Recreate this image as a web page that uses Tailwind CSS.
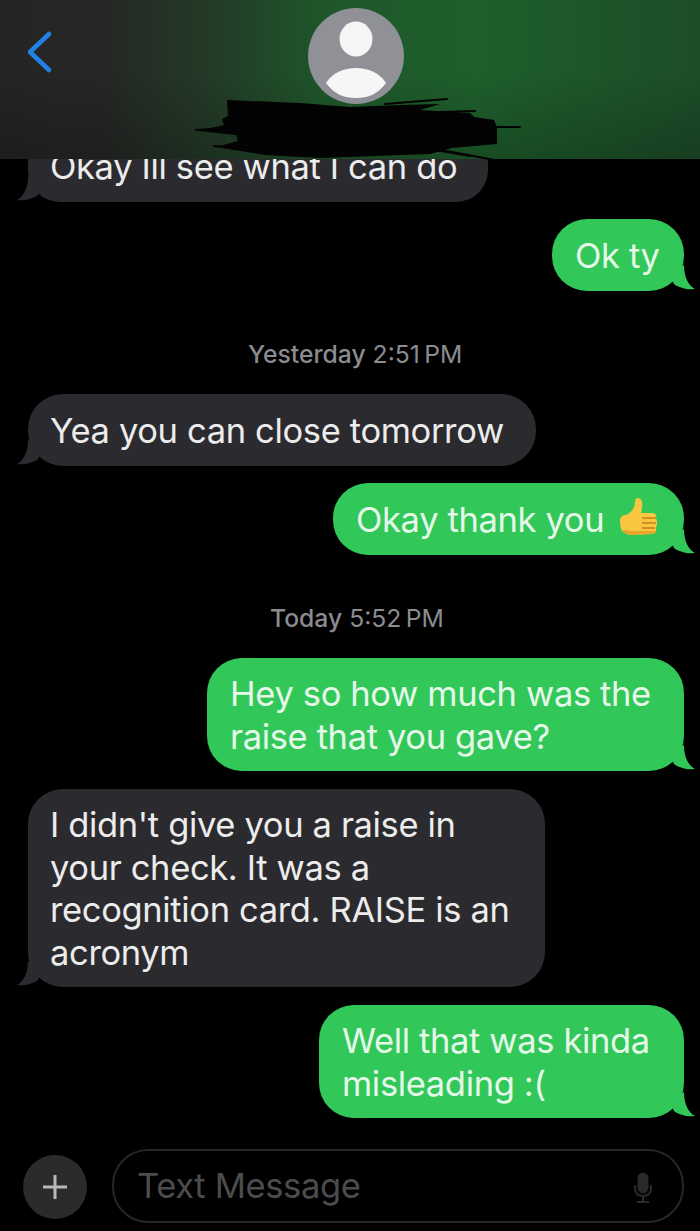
<!DOCTYPE html>
<html lang="en">
<head>
    <meta charset="UTF-8">
    <meta name="viewport" content="width=device-width, initial-scale=1.0">
    <title>Text Message</title>
    <script src="https://cdn.jsdelivr.net/npm/@tailwindcss/browser@4"></script>
</head>
<body class="bg-black w-[700px] h-[1231px] overflow-hidden font-['Inter','Liberation_Sans',sans-serif] text-[34.5px] leading-[42.5px] tracking-[-0.35px] text-[#ececec]">

<!-- header -->
<header class="relative z-10 h-[159px] bg-[linear-gradient(180deg,#0000_45%,#0003_100%),linear-gradient(90deg,#242424_0%,#252725_15%,#233c27_31%,#1f562a_46%,#1e5f2c_68%,#1c4d28_100%)]">
    <svg class="absolute left-[26px] top-[30px] w-[28px] h-[44px]" viewBox="0 0 28 44" fill="none" stroke="#1f82e6" stroke-width="4.5" stroke-linecap="round" stroke-linejoin="round">
        <path d="M23 4 L4 22 L23 40"/>
    </svg>
    <div class="absolute left-[308px] top-[8px] w-[96px] h-[96px] rounded-full overflow-hidden bg-[#8f9197]">
        <svg class="w-full h-full" viewBox="0 0 96 96" fill="#f6f6f6">
            <ellipse cx="48" cy="31" rx="16.5" ry="17.5"/>
            <path d="M18 75 C24 65 36 60 48 60 C60 60 72 65 78 75 C70 86 60 90 48 90 C36 90 26 86 18 75 Z"/>
        </svg>
    </div>
    <!-- scribbled out name, coordinates are page pixels -->
    <svg class="absolute left-0 top-0 w-[700px] h-[165px]" viewBox="0 0 700 165" fill="#030303" stroke="#030303" stroke-linecap="round">
        <path stroke="none" d="M227 100 L300 103 L350 107 L400 105 L440 104 L420 110 L470 113 L474 117 L494 120 L497 127 L497 131 L497 144 L452 148 L430 154 L320 158 L265 155 L216 147 L238 141 L236 135 L198 131 L224 125 L222 119 L228 116 Z"/>
        <path fill="none" stroke-width="2" d="M385 104 L447 99 M440 112 L475 111 M490 127 L520 127 M196 130 L240 127 M214 146 L280 150 M420 146 L500 161 M435 150 L470 156"/>
    </svg>
</header>

<!-- messages -->
<main class="-mt-[29px] flex flex-col">
    <div class="relative ml-[28px] w-[460px] h-[72px] pl-[22px] pt-[16px] rounded-[32px] bg-[#2b2b2f]">
        Okay Ill see what I can do
        <svg class="absolute -left-[11px] bottom-0 w-[30px] h-[28px] text-[#2b2b2f]" viewBox="0 0 30 28" fill="currentColor"><path d="M11 2 C11 15 6 23 0 26 C7 27 16 25 21 21 L26 10 Z"/></svg>
    </div>

    <div class="relative self-end mr-[16px] mt-[17px] w-[132px] h-[72px] pl-[23px] pt-[16px] rounded-[35px] bg-[#31c859] text-[#e6f8ea]">
        Ok ty
        <svg class="absolute -right-[11px] bottom-0 w-[30px] h-[28px] -scale-x-100 text-[#31c859]" viewBox="0 0 30 28" fill="currentColor"><path d="M11 2 C11 15 6 23 0 26 C7 27 16 25 21 21 L26 10 Z"/></svg>
    </div>

    <p class="mt-[47px] h-[31px] ml-[248px] text-[24.7px] leading-[32px] tracking-normal text-[#8b8b90]"><span class="font-medium">Yesterday</span> 2:51&thinsp;PM</p>

    <div class="relative ml-[28px] mt-[25px] w-[508px] h-[72px] pl-[22px] pt-[16px] rounded-[35px] bg-[#2b2b2f]">
        Yea you can close tomorrow
        <svg class="absolute -left-[11px] bottom-0 w-[30px] h-[28px] text-[#2b2b2f]" viewBox="0 0 30 28" fill="currentColor"><path d="M11 2 C11 15 6 23 0 26 C7 27 16 25 21 21 L26 10 Z"/></svg>
    </div>

    <div class="relative self-end mr-[16px] mt-[17px] w-[351px] h-[72px] pl-[23px] pt-[16px] rounded-[35px] bg-[#31c859] text-[#e6f8ea] flex items-start">
        <span>Okay thank you</span>
        <svg class="absolute left-[284px] top-[12px] w-[44px] h-[44px]" viewBox="0 0 44 44">
            <path d="M3 26 C3 21 6 20 9 20 C14 18 18 13 18 7 C18 2 23 2 24.5 5.5 C26 9 25 14 24 18 L35 18 C39 18 40 21 39 24 C41 27 40 30 39 32 C40 35 38 39 35 39 L14 40 C11 40 9 38 6 37 C4 35 3 30 3 26 Z" fill="#f8c73f"/>
            <path d="M25 23 H39 M25 28 H39 M25 33 H38" stroke="#d48f24" stroke-width="2"/>
            <path d="M6 37 C9 38 11 40 14 40 L35 39 C37 39 38 38 39 36 L22 36 C16 36 10 36 6 35 Z" fill="#e9a52c"/>
        </svg>
        <svg class="absolute -right-[11px] bottom-0 w-[30px] h-[28px] -scale-x-100 text-[#31c859]" viewBox="0 0 30 28" fill="currentColor"><path d="M11 2 C11 15 6 23 0 26 C7 27 16 25 21 21 L26 10 Z"/></svg>
    </div>

    <p class="mt-[47px] h-[31px] ml-[270px] text-[24.7px] leading-[32px] tracking-normal text-[#8b8b90]"><span class="font-medium">Today</span> 5:52&thinsp;PM</p>

    <div class="relative self-end mr-[16px] mt-[25px] w-[477px] h-[113px] pl-[23px] pt-[15px] rounded-[35px] bg-[#31c859] text-[#e6f8ea]">
        Hey so how much was the<br>raise that you gave?
        <svg class="absolute -right-[11px] bottom-0 w-[30px] h-[28px] -scale-x-100 text-[#31c859]" viewBox="0 0 30 28" fill="currentColor"><path d="M11 2 C11 15 6 23 0 26 C7 27 16 25 21 21 L26 10 Z"/></svg>
    </div>

    <div class="relative ml-[28px] mt-[18px] w-[517px] h-[198px] pl-[22px] pt-[15px] rounded-[35px] bg-[#2b2b2f]">
        I didn't give you a raise in<br>your check. It was a<br>recognition card. RAISE is an<br>acronym
        <svg class="absolute -left-[11px] bottom-0 w-[30px] h-[28px] text-[#2b2b2f]" viewBox="0 0 30 28" fill="currentColor"><path d="M11 2 C11 15 6 23 0 26 C7 27 16 25 21 21 L26 10 Z"/></svg>
    </div>

    <div class="relative self-end mr-[16px] mt-[18px] w-[365px] h-[113px] pl-[23px] pt-[15px] rounded-[35px] bg-[#31c859] text-[#e6f8ea]">
        Well that was kinda<br>misleading :(
        <svg class="absolute -right-[11px] bottom-0 w-[30px] h-[28px] -scale-x-100 text-[#31c859]" viewBox="0 0 30 28" fill="currentColor"><path d="M11 2 C11 15 6 23 0 26 C7 27 16 25 21 21 L26 10 Z"/></svg>
    </div>

    <!-- composer -->
    <footer class="mt-[31px] ml-[23px] flex items-start gap-[25px]">
        <div class="mt-[6px] w-[64px] h-[64px] rounded-full bg-[#2b2b2d] flex items-center justify-center">
            <svg class="w-[26px] h-[26px]" viewBox="0 0 26 26" stroke="#b9b9b9" stroke-width="3"><path d="M13 1 V25 M1 13 H25"/></svg>
        </div>
        <div class="relative w-[572px] h-[74px] rounded-[36px] border-2 border-[#262626] pl-[23px] pt-[14px] text-[#4c4c4c]">
            Text Message
            <svg class="absolute right-[26px] top-[20px] w-[26px] h-[34px]" viewBox="0 0 26 34" fill="none" stroke="#2a2a2a">
                <rect x="8" y="2" width="10" height="20" rx="5" fill="#2a2a2a"/>
                <path d="M5 14 V17 C5 22 8 25 13 25 C18 25 21 22 21 17 V14 M13 25 V31 M7 31 H19" stroke-width="2"/>
            </svg>
        </div>
    </footer>
</main>
</body>
</html>
